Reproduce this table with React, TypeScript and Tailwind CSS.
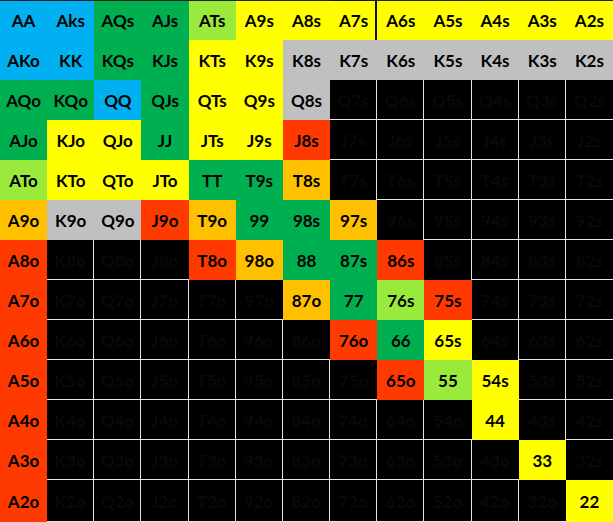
import React from "react";

const ranks = ["A", "K", "Q", "J", "T", "9", "8", "7", "6", "5", "4", "3", "2"];

// colour codes per row: b blue, g green, l light green, y yellow, s grey, o orange, r red, x black
const rows = [
  "bbgglyyyyyyyy",
  "bbggyysssssss",
  "ggbgyysxxxxxx",
  "gyygyyrxxxxxx",
  "lyyyggoxxxxxx",
  "ossroggoxxxxx",
  "rxxxroggrxxxx",
  "rxxxxxoglrxxx",
  "rxxxxxxrgyxxx",
  "rxxxxxxxrlyxx",
  "rxxxxxxxxxyxx",
  "rxxxxxxxxxxyx",
  "rxxxxxxxxxxxy",
];

const fill: Record<string, string> = {
  b: "bg-[#00b0f0] text-black",
  g: "bg-[#00b050] text-black",
  l: "bg-[#9aea3c] text-black",
  y: "bg-[#ffff00] text-black",
  s: "bg-[#c0c0c0] text-black",
  o: "bg-[#ffc000] text-black",
  r: "bg-[#ff3a00] text-black",
  x: "bg-black text-[#090909]",
};

const handName = (i: number, j: number) => {
  if (i === 0 && j === 1) return "Aks";
  if (i === j) return ranks[i] + ranks[j];
  if (j > i) return ranks[i] + ranks[j] + "s";
  return ranks[j] + ranks[i] + "o";
};

const isBlack = (i: number, j: number) => rows[i]?.[j] === "x";

export default function App() {
  const cells = [];
  for (let i = 0; i < 13; i++) {
    for (let j = 0; j < 13; j++) {
      const code = rows[i][j];
      const black = code === "x";
      const right = black && j < 12 && isBlack(i, j + 1);
      const bottom = black && (i === 12 || isBlack(i + 1, j));
      let edge = "";
      if (i === 0 && j === 7) edge = "shadow-[inset_-2px_1px_0_#111]";
      else if (i === 0) edge = "shadow-[inset_0_1px_0_#222]";
      cells.push(
        <div
          key={`${i}-${j}`}
          className={`flex items-center justify-center pt-0.5 ${fill[code]} ${edge} ${
            right ? "border-r border-r-[#e4e4e4]" : ""
          } ${bottom ? "border-b border-b-[#e4e4e4]" : ""}`}
        >
          {handName(i, j)}
        </div>
      );
    }
  }

  return (
    <div className="w-[613px] h-[522px] bg-black overflow-hidden">
      <div
        className="grid grid-cols-[repeat(13,1fr)] grid-rows-[repeat(12,40px)_42px] w-full h-full text-[17px] font-bold"
        style={{ fontFamily: "Lato, 'Open Sans', sans-serif" }}
      >
        {cells}
      </div>
    </div>
  );
}
